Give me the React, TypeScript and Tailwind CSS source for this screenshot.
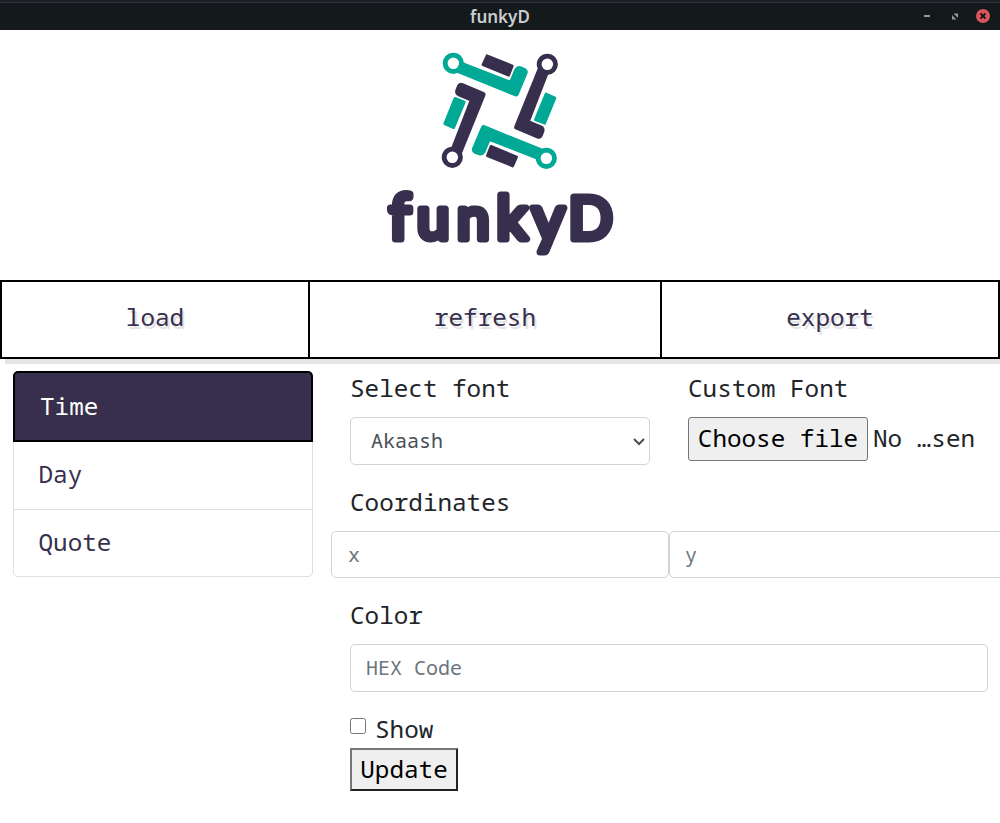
import React from "react";

const TEAL = "#00a896";
const INK = "#372f4d";

const ARMS = [
  { angle: 0, main: TEAL, accent: INK },
  { angle: 90, main: INK, accent: TEAL },
  { angle: 180, main: TEAL, accent: INK },
  { angle: 270, main: INK, accent: TEAL },
];

function Logo() {
  return (
    <svg className="block h-[240px] w-[260px]" viewBox="0 0 260 240">
      <g transform="translate(60 10) scale(0.33333)" strokeLinejoin="round">
        {ARMS.map(({ angle, main, accent }) => (
          <g key={angle} transform={`rotate(${angle} 209.5 212.5)`}>
            <path d="M94 74 L244 132 L261 91 Q264 86 269 87 L282 92 Q286 94 284 99 L258 161 L88 92 Z" fill={main} stroke={main} strokeWidth="17" />
            <circle cx="70" cy="70" r="24.5" fill="#fff" stroke={main} strokeWidth="14.5" />
            <path d="M171 47 L247 78 L236 106 L159 74 Z" fill={accent} stroke={accent} strokeWidth="8" />
          </g>
        ))}
      </g>
      <text className="font-['Lato']" fontSize="58" y="208.5" fill={INK} stroke={INK} strokeWidth="7" strokeLinejoin="round">
        <tspan x="19" fontSize="62">f</tspan>
        <tspan x="47">u</tspan>
        <tspan x="87">n</tspan>
        <tspan x="126.5" fontSize="60">k</tspan>
        <tspan x="162" y="211" fontSize="63">y</tspan>
        <tspan x="198.5" y="208.5">D</tspan>
      </text>
    </svg>
  );
}

function TitleBar() {
  return (
    <header className="flex h-[30px] items-center border-t-2 border-[#1f2029] bg-[#14191b] shadow-[inset_0_1px_0_#303435]">
      <div className="w-[100px]" />
      <div className="flex-1 text-center font-['Noto_Sans',sans-serif] text-[17px] leading-none font-semibold text-[#c9cdce]">funkyD</div>
      <svg className="h-[28px] w-[100px]" viewBox="0 0 100 28">
        <path d="M24 14h6" stroke="#92989b" strokeWidth="2" />
        <path d="M53.5 11.5H58V16zM52 13V17.5h4.5z" fill="#92989b" />
        <circle cx="83" cy="14" r="7" fill="#d9545b" />
        <path d="M80.5 11.5l5 5m0-5l-5 5" stroke="#14191b" strokeWidth="1.8" />
      </svg>
    </header>
  );
}

function Action({ label, className }: { label: string; className: string }) {
  return (
    <button className={`border-black pb-[5px] text-center text-[#372f4d] [text-shadow:2px_3px_0_#e3e3e3] ${className}`}>
      {label}
    </button>
  );
}

export default function App() {
  const field = "rounded-[5px] border border-[#ced4da] bg-white text-[20px] text-[#495057] placeholder:text-[#6c757d]";
  return (
    <div className="h-[823px] w-[1000px] overflow-hidden bg-white font-['Noto_Sans_Mono','DejaVu_Sans_Mono',monospace] text-[24.3px] leading-[34px] text-[#212529]">
      <TitleBar />
      <div className="flex h-[250px] justify-center">
        <Logo />
      </div>
      <nav className="flex h-[79px] border-2 border-black shadow-[5px_5px_0_#e5e5e5]">
        <Action label="load" className="w-[308px] border-r-2" />
        <Action label="refresh" className="w-[352px] border-r-2" />
        <Action label="export" className="flex-1" />
      </nav>
      <main className="flex">
        <aside className="mt-3 ml-[13px] w-[300px] shrink-0 text-[#372f4d]">
          <div className="flex h-[71px] items-center rounded-t-[5px] border-2 border-black bg-[#372f4d] pb-[2px] pl-[25px] text-white">Time</div>
          <div className="flex h-[67px] items-center border-x border-[#dfdfdf] pb-[3px] pl-[24.5px]">Day</div>
          <div className="flex h-[68px] items-center rounded-b-[5px] border border-[#dfdfdf] pb-[2px] pl-[24.5px]">Quote</div>
        </aside>
        <section className="ml-[37px] w-[650px] shrink-0">
          <div className="flex pt-3">
            <div className="w-[338px]">
              <label className="block h-[46px]">Select font</label>
              <div className="grid w-[300px] items-center">
                <select className={`${field} col-start-1 row-start-1 h-12 w-full appearance-none pl-5`}>
                  <option>Akaash</option>
                </select>
                <svg className="pointer-events-none col-start-1 row-start-1 mr-[5px] h-3 w-3 justify-self-end" viewBox="0 0 12 12">
                  <path d="M1 4l5 5 5-5" fill="none" stroke="#495057" strokeWidth="2" />
                </svg>
              </div>
            </div>
            <div>
              <label className="block h-[46px]">Custom Font</label>
              <div className="flex items-center gap-[5px]">
                <button className="h-11 w-[180px] rounded-[3px] border border-[#767676] bg-[#efefef] pb-[2px] whitespace-nowrap text-black">Choose file</button>
                <span className="pb-[2px] whitespace-nowrap">No …sen</span>
              </div>
            </div>
          </div>
          <label className="mt-5 block h-[46px]">Coordinates</label>
          <div className="-ml-[19px] flex">
            <input className={`${field} h-[47px] w-[338px] shrink-0 px-4`} placeholder="x" />
            <input className={`${field} h-[47px] w-[338px] shrink-0 px-[15px]`} placeholder="y" />
          </div>
          <label className="mt-5 block h-[46px]">Color</label>
          <input className={`${field} block h-12 w-[638px] px-[15px] pb-[2px]`} placeholder="HEX Code" />
          <label className="mt-5 flex h-9 items-center pb-[2px]">
            <input type="checkbox" className="mr-[9px] mb-[7px] h-4 w-4" />
            Show
          </label>
          <button className="block h-[43px] w-[108px] border-2 border-t-[#767676] border-r-[#212121] border-b-[#212121] border-l-[#767676] bg-[#efefef] pb-[2px] text-black">Update</button>
        </section>
      </main>
    </div>
  );
}
